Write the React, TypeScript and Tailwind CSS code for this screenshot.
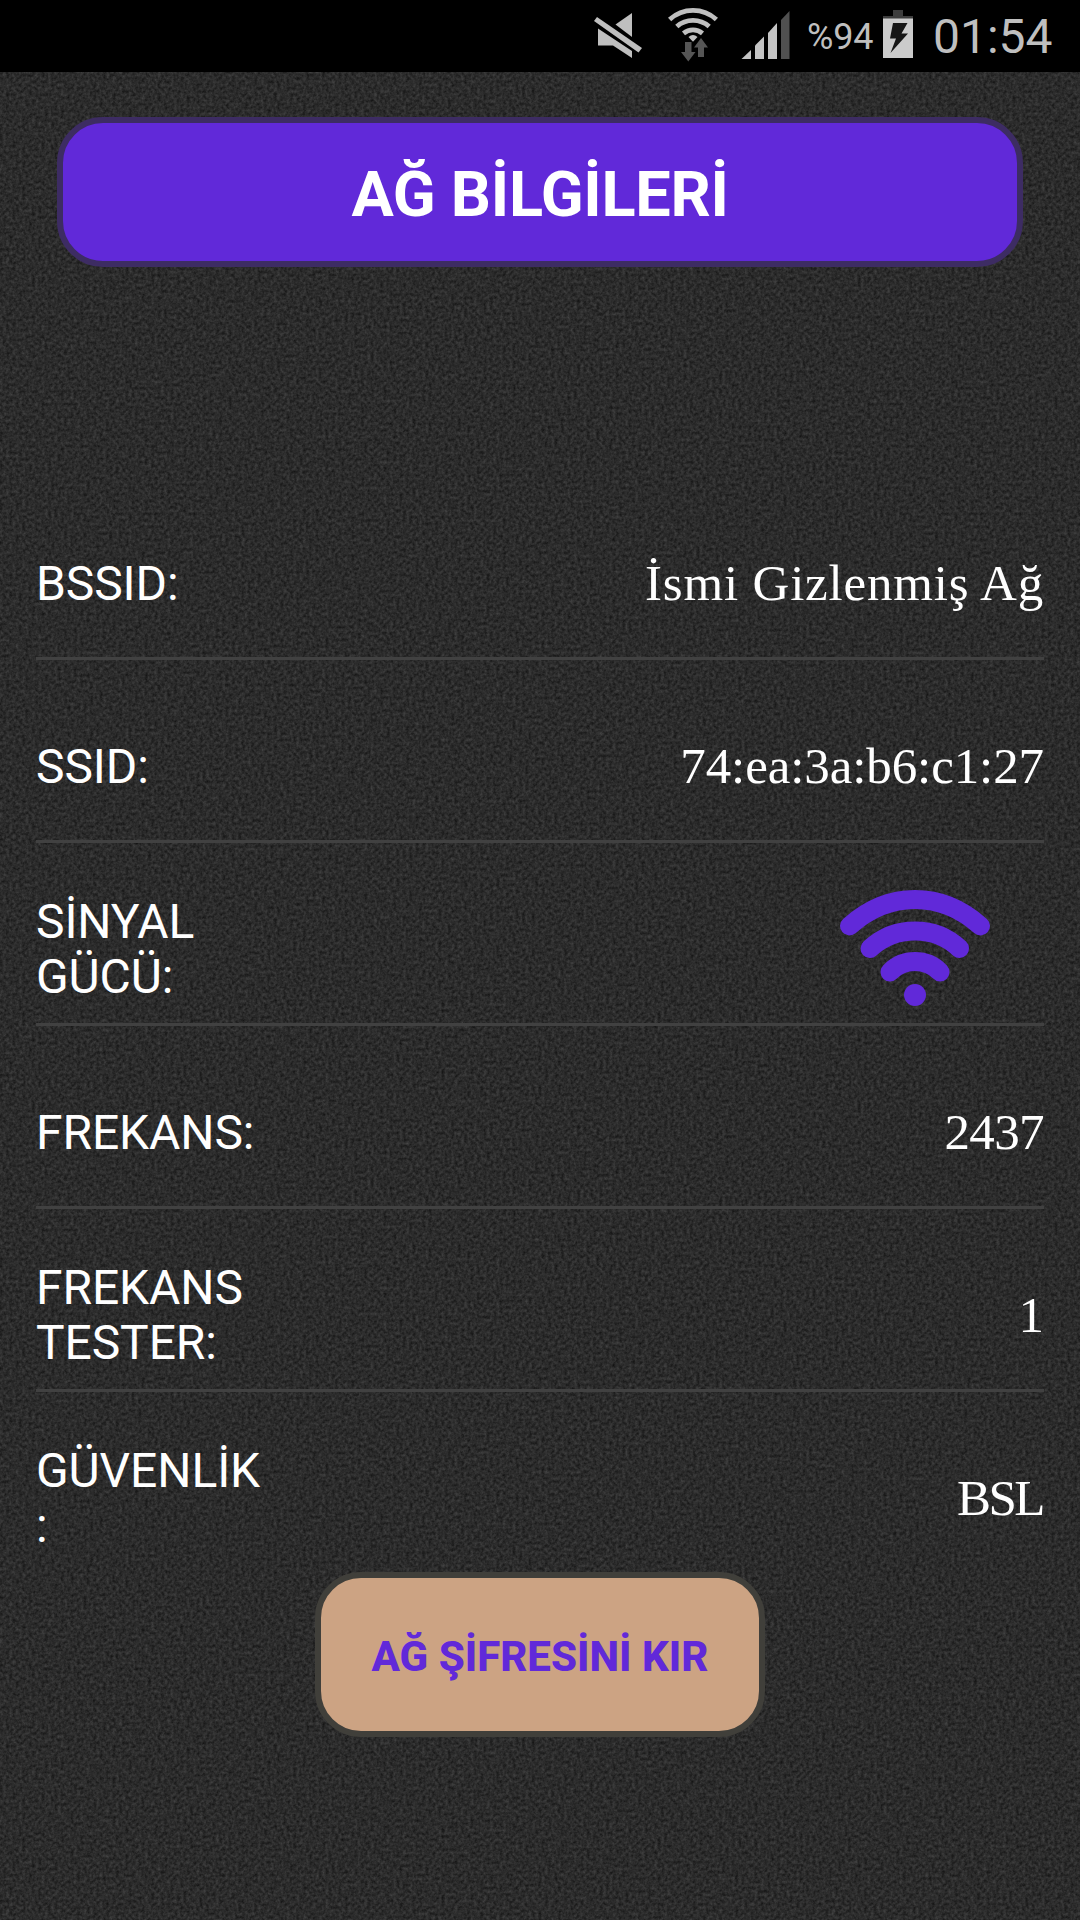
import type { ReactNode } from 'react';

function MutedIcon() {
  return (
    <svg className="ml-[594px] h-[72px] w-[48px] shrink-0" viewBox="594 0 48 72" fill="#bfbfbf">
      <path d="M598 28.5 632 51V58L613 45.5H598Z" />
      <path d="M615.500 24.500 632 13V37Z" />
      <path d="M597 17 642 48 638.500 52.500 594 21Z" stroke="#000" strokeWidth="2" paintOrder="stroke" />
    </svg>
  );
}

function StatusWifiIcon() {
  return (
    <svg className="ml-[26px] h-[72px] w-[50px] shrink-0" viewBox="668 0 50 72" fill="none" stroke="#bfbfbf" strokeWidth="4.800">
      <path d="M669.600 19.500A34.500 34.500 0 0 1 716.400 19.500" />
      <path d="M676.800 26.500A24.500 24.500 0 0 1 709.200 26.500" />
      <path d="M683.500 33.300A15 15 0 0 1 702.500 33.300" />
      <path d="M688.500 37Q693 33 697.500 37L693 41.700Z" fill="#bfbfbf" stroke="none" />
      <path d="M685 42h6.500v10h4L688.300 61.500 681 52h4Z" fill="#555" stroke="none" />
      <path d="M701 38 708 47.500H704V57H698V47.500H694Z" fill="#555" stroke="none" />
    </svg>
  );
}

function CellSignalIcon() {
  return (
    <svg className="ml-[22px] h-[72px] w-[50px] shrink-0" viewBox="740 0 50 72" fill="#c4c4c4">
      <path d="M741.500 59 751 50V59Z" />
      <path d="M755 45.500 764 36.500V59H755Z" />
      <path d="M768 33 777 23V59H768Z" />
      <path d="M781 20 789.500 11V59H781Z" fill="#505050" />
    </svg>
  );
}

function BatteryIcon() {
  return (
    <svg className="ml-[9px] h-[72px] w-[30px] shrink-0" viewBox="883 0 30 72">
      <path d="M893 10h10v6h10v3h-30v-3h10Z" fill="#3d3d3d" />
      <path d="M883 18.500h30V58h-30Z" fill="#cbcbcb" />
      <path d="M893 23h14.500L901.500 33.500H908L890.500 53 896 38.500H890Z" fill="#161616" />
    </svg>
  );
}

function SignalStrengthIcon() {
  return (
    <svg className="mr-[53px] mb-[2px] h-[118px] w-[152px]" viewBox="839 889 152 118" fill="none" stroke="#6129d9" strokeWidth="19" strokeLinecap="round">
      <path d="M849.500 926Q879 899.500 915 899.500T980.500 926" />
      <path d="M870 948.500Q889 931 915 931T959.500 948.500" />
      <path d="M890 972Q900 961.500 915 961.500T940 972" />
      <circle cx="915" cy="995" r="11" fill="#6129d9" stroke="none" />
    </svg>
  );
}

function Grain() {
  return (
    <svg className="absolute inset-0 h-full w-full" aria-hidden="true">
      <filter id="grain" x="0" y="0" width="100%" height="100%" colorInterpolationFilters="sRGB">
        <feTurbulence type="fractalNoise" baseFrequency="0.31" numOctaves="3" seed="4" />
        <feColorMatrix values="0.22 0 0 0 0.06  0.22 0 0 0 0.06  0.22 0 0 0 0.06  0 0 0 0 1" />
      </filter>
      <rect width="100%" height="100%" filter="url(#grain)" />
    </svg>
  );
}

function Row({ label, children, last = false }: { label: string; children: ReactNode; last?: boolean }) {
  return (
    <div className={`flex h-[183px] items-center justify-between border-b-[3px] pt-[32px] ${last ? 'border-transparent' : 'border-[#414141]'}`}>
      <div className="whitespace-pre-line text-[48px] leading-[55px] tracking-[-0.1px]">{label}</div>
      {children}
    </div>
  );
}

function Value({ className, children }: { className: string; children: ReactNode }) {
  return (
    <div className={`whitespace-nowrap font-['Liberation_Serif',serif] text-[51px] leading-[56px] ${className}`}>
      {children}
    </div>
  );
}

export default function App() {
  return (
    <div className="relative h-[1920px] w-[1080px] overflow-hidden bg-[#2a2a2a] font-['Roboto',sans-serif] text-white">
      <Grain />
      <div className="relative flex h-full flex-col">
        <header className="flex h-[72px] items-center bg-black text-[#bfbfbf]">
          <MutedIcon />
          <StatusWifiIcon />
          <CellSignalIcon />
          <span className="ml-[17px] w-[67px] whitespace-nowrap pt-[2px] text-[36px] leading-[70px] tracking-[-0.2px]">%94</span>
          <BatteryIcon />
          <span className="ml-[20px] whitespace-nowrap pt-[2px] text-[48px] leading-[70px]">01:54</span>
        </header>

        <h1 className="mx-[57px] mt-[45px] flex h-[150px] items-center justify-center rounded-[46px] border-[6px] border-[#3d2c63] bg-[#6129d9] pt-[4px] text-[63px] leading-none font-bold tracking-[-0.3px]">
          AĞ BİLGİLERİ
        </h1>

        <main className="mx-[36px] mt-[210px]">
          <Row label="BSSID:">
            <Value className="tracking-[0.8px]">İsmi Gizlenmiş Ağ</Value>
          </Row>
          <Row label="SSID:">
            <Value className="tracking-[-0.1px]">74:ea:3a:b6:c1:27</Value>
          </Row>
          <Row label={'SİNYAL\nGÜCÜ:'}>
            <SignalStrengthIcon />
          </Row>
          <Row label="FREKANS:">
            <Value className="tracking-[-0.6px]">2437</Value>
          </Row>
          <Row label={'FREKANS\nTESTER:'}>
            <Value className="">1</Value>
          </Row>
          <Row label={'GÜVENLİK\n:'} last>
            <Value className="mr-[1px] tracking-[-2.5px]">BSL</Value>
          </Row>
        </main>

        <button className="mt-[-3px] ml-[315px] flex h-[165px] w-[450px] items-center justify-center rounded-[46px] border-[6px] border-[#403f3a] bg-[#cca383] pt-[4px] text-[42px] leading-none font-extrabold text-[#6129d9]">
          AĞ ŞİFRESİNİ KIR
        </button>
      </div>
    </div>
  );
}
